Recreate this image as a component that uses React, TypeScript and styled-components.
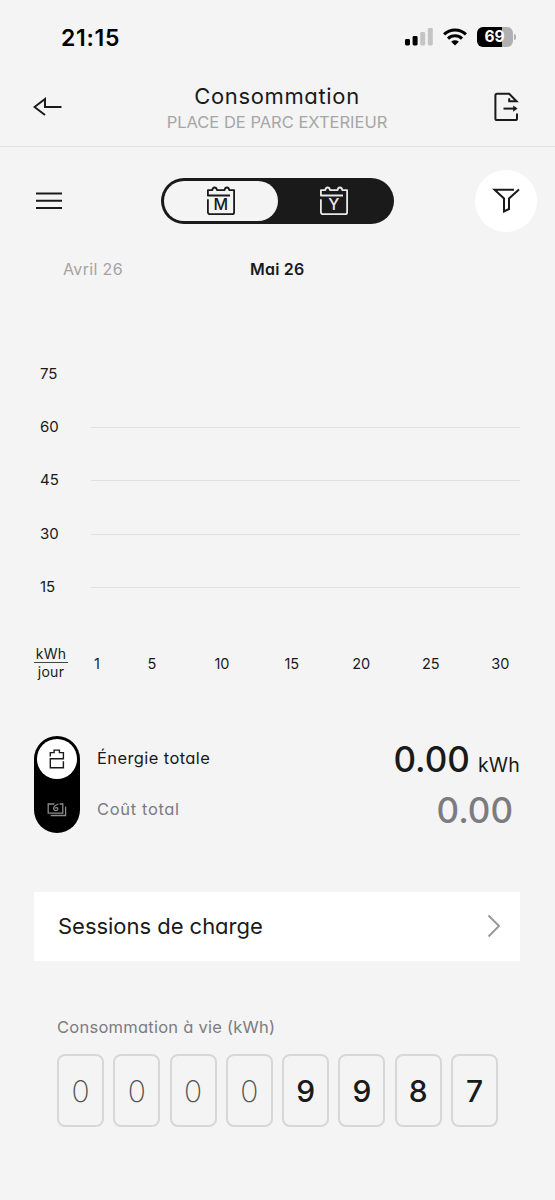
import React from "react";
import styled, { createGlobalStyle, css } from "styled-components";

const GlobalStyle = createGlobalStyle`
  *, *::before, *::after { box-sizing: border-box; }
  body {
    margin: 0;
    background: #f4f4f4;
    color: #1a1a1a;
    font-family: Inter, "Liberation Sans", sans-serif;
    font-feature-settings: "cv11" 1;
    -webkit-font-smoothing: antialiased;
  }
  button { font: inherit; color: inherit; border: 0; padding: 0; background: none; }
  svg { display: block; flex: none; }
`;

const Screen = styled.main`
  width: 555px;
  height: 1200px;
  overflow: hidden;
  display: flex;
  flex-direction: column;
  background: #f4f4f4;
`;

const Label = styled.span<{ $size: number; $weight?: number; $track?: number; $color?: string }>`
  font-size: ${(p) => p.$size}px;
  font-weight: ${(p) => p.$weight ?? 400};
  letter-spacing: ${(p) => p.$track ?? 0}px;
  color: ${(p) => p.$color ?? "#1a1a1a"};
  line-height: 1.2;
  white-space: nowrap;
`;

const StatusBar = styled.div`
  height: 74px;
  padding: 0 39px 0 61px;
  display: flex;
  align-items: center;
  justify-content: space-between;
`;

const Clock = styled.div`
  padding-top: 3px;
`;

const StatusIcons = styled.div`
  display: flex;
  align-items: center;
  gap: 10px;
`;

const Battery = styled.div`
  display: flex;
  align-items: center;
  gap: 1px;
`;

const BatteryBody = styled.div`
  width: 36px;
  height: 20px;
  border-radius: 6px;
  background: linear-gradient(90deg, #000 69%, #b0b0b0 69%);
  color: #fff;
  font-size: 15.5px;
  font-weight: 700;
  line-height: 20px;
  text-align: center;
  padding-right: 1px;
`;

const BatteryCap = styled.div`
  width: 2px;
  height: 6px;
  border-radius: 0 2px 2px 0;
  background: #b0b0b0;
`;

const Header = styled.header`
  height: 73px;
  padding: 0 36px 0 33px;
  display: grid;
  grid-template-columns: 60px 1fr 60px;
  border-bottom: 1px solid #e2e2e2;
`;

const HeaderAction = styled.button<{ $end?: boolean }>`
  display: flex;
  align-items: center;
  justify-content: ${(p) => (p.$end ? "flex-end" : "flex-start")};
  height: 65px;
`;

const Titles = styled.div`
  display: flex;
  flex-direction: column;
  align-items: center;
  gap: 4px;
  padding: 9px 0 0 2px;
`;

const Toolbar = styled.div`
  height: 107px;
  padding: 0 18px 0 36px;
  display: flex;
  align-items: center;
  justify-content: space-between;
`;

const MenuButton = styled.button`
  width: 44px;
  display: flex;
`;

const PeriodSwitch = styled.div`
  width: 233px;
  height: 46px;
  padding: 3px;
  border-radius: 23px;
  background: #1a1a1a;
  display: flex;
`;

const PeriodOption = styled.button<{ $active?: boolean }>`
  flex: 1;
  display: flex;
  align-items: center;
  justify-content: center;
  border-radius: 20px;
  ${(p) => (p.$active ? css`background: #f4f4f4; color: #1a1a1a;` : css`color: #e8e8e8;`)}
`;

const FilterButton = styled.button`
  width: 62px;
  height: 62px;
  border-radius: 50%;
  background: #fff;
  display: flex;
  align-items: center;
  justify-content: center;
`;

const Months = styled.div`
  height: 32px;
  padding-left: 63px;
  display: grid;
  grid-template-columns: 187px 1fr;
  align-items: center;
`;

const Chart = styled.section`
  padding: 61px 35px 0 40px;
  display: flex;
  flex-direction: column;
`;

const ChartRow = styled.div`
  height: 53.3px;
  display: grid;
  grid-template-columns: 51px 1fr;
  align-items: center;
`;

const GridLine = styled.div`
  height: 1px;
  margin-top: 1px;
  background: #e0e0e0;
`;

const DayAxis = styled.div`
  height: 36px;
  margin-top: 32px;
  padding: 0 20px 0 34px;
  display: flex;
  align-items: center;
`;

const Unit = styled.div`
  width: 34px;
  display: flex;
  flex-direction: column;
  align-items: center;
`;

const UnitBar = styled.div`
  width: 34px;
  height: 1px;
  background: #444;
  margin: 0 0 1px;
`;

const Days = styled.div`
  flex: 1;
  padding-left: 9px;
  margin-top: 1px;
  display: grid;
  grid-template-columns: 40px 70px 70px 69.5px 69.5px 69.5px 69.5px;
  text-align: center;
`;

const Totals = styled.section`
  height: 97px;
  margin: 55px 35px 0 34px;
  display: grid;
  grid-template-rows: 97px;
  grid-template-columns: 46px 1fr auto;
  column-gap: 17px;
`;

const MetricSwitch = styled.div`
  border-radius: 23px;
  padding: 3px;
  background: #000;
  display: flex;
  flex-direction: column;
`;

const MetricOption = styled.button<{ $active?: boolean }>`
  height: ${(p) => (p.$active ? 40 : 51)}px;
  margin-top: ${(p) => (p.$active ? 0 : 5)}px;
  flex: none;
  border-radius: 50%;
  display: flex;
  align-items: center;
  justify-content: center;
  ${(p) => (p.$active ? css`background: #fff; color: #1a1a1a;` : css`color: #8b8b8b;`)}
`;

const MetricLabels = styled.div`
  display: grid;
  grid-template-rows: 45px 57px;
  align-items: center;
`;

const MetricValues = styled.div`
  display: grid;
  grid-template-rows: 46px 55px;
  align-items: center;
  justify-items: end;
`;

const ValueWithUnit = styled.div`
  display: flex;
  align-items: baseline;
  gap: 8px;
`;

const SecondaryValue = styled.div`
  padding-right: 7px;
`;

const SessionsLink = styled.button`
  height: 69px;
  margin: 59px 35px 0 34px;
  padding: 0 19px 1px 24px;
  background: #fff;
  display: flex;
  align-items: center;
  justify-content: space-between;
`;

const Lifetime = styled.section`
  margin: 57px 57px 0;
  display: flex;
  flex-direction: column;
  gap: 16px;
`;

const Counter = styled.div`
  display: flex;
  gap: 9.3px;
`;

const Digit = styled.div<{ $leading?: boolean }>`
  width: 47px;
  height: 73px;
  border: 2px solid #d7d7d7;
  border-radius: 8px;
  display: flex;
  align-items: center;
  justify-content: center;
  font-size: 30px;
  font-weight: ${(p) => (p.$leading ? 200 : 500)};
  color: ${(p) => (p.$leading ? "#555" : "#1a1a1a")};
`;

const SignalIcon = () => (
  <svg width="28" height="18" viewBox="0 0 28 18">
    <rect x="0" y="11" width="5" height="6.5" rx="1.4" fill="#000" />
    <rect x="7.6" y="8" width="5" height="9.5" rx="1.4" fill="#000" />
    <rect x="15.2" y="4" width="5" height="13.5" rx="1.4" fill="#c4c4c4" />
    <rect x="22.8" y="0" width="5" height="17.5" rx="1.4" fill="#c4c4c4" />
  </svg>
);

const WifiIcon = () => (
  <svg width="24" height="18" viewBox="0 0 24 18" fill="none" stroke="#000" strokeWidth="3">
    <path d="M1.1 6.4a15.5 15.5 0 0 1 21.8 0" />
    <path d="M5 10.6a10 10 0 0 1 14 0" />
    <path d="M8.2 13.8a5.6 5.6 0 0 1 7.6 0L12 17.6z" fill="#000" stroke="none" />
  </svg>
);

const BackIcon = () => (
  <svg width="30" height="20" viewBox="0 0 30 20" fill="none" stroke="#1a1a1a" strokeWidth="2">
    <path d="M28.5 10H12V2L1.5 10L12 18" />
  </svg>
);

const ExportIcon = () => (
  <svg width="26" height="30" viewBox="0 0 26 30" fill="none" stroke="#1a1a1a" strokeWidth="2">
    <path d="M24 21.5V26.5a1.6 1.6 0 0 1-1.6 1.6H4a1.6 1.6 0 0 1-1.6-1.6V3.4A1.6 1.6 0 0 1 4 1.8H16.2L23.5 9.3H16.2V6.2" />
    <path d="M10.5 16.6H22.5" />
    <path d="M20.2 13.4l4.4 3.2-4.4 3.2z" fill="#1a1a1a" stroke="none" />
  </svg>
);

const MenuIcon = () => (
  <svg width="26" height="18" viewBox="0 0 26 18" stroke="#1a1a1a" strokeWidth="2">
    <path d="M0 1.6H26M0 8.8H26M0 16H26" />
  </svg>
);

const CalendarIcon = ({ letter }: { letter: string }) => (
  <svg width="30" height="30" viewBox="0 0 30 30" fill="none" stroke="currentColor" strokeWidth="1.8" strokeLinejoin="round">
    <path d="M24 9.5H1.9V4.2H6.3C6.5 2.2 7.3 1.5 8.6 1.5S10.7 2.2 11 4.2H18.6C18.8 2.2 19.6 1.5 20.9 1.5S23 2.2 23.3 4.2H28.1V26.2a2 2 0 0 1-2 2H3.9a2 2 0 0 1-2-2V13.3" />
    <text x="14.7" y="23.8" textAnchor="middle" fontSize="16" fontWeight={500} fill="currentColor" stroke="none">
      {letter}
    </text>
  </svg>
);

const FilterIcon = () => (
  <svg width="30" height="26" viewBox="0 0 30 26" fill="none" stroke="#1a1a1a" strokeWidth="2">
    <path d="M23 1.8H3.6L13 10.4V23.4L18 21V10.4L28 1.4" />
  </svg>
);

const BatteryIcon = () => (
  <svg width="16" height="20" viewBox="0 0 16 20" fill="none" stroke="currentColor" strokeWidth="1.4">
    <path d="M1.3 7.6V3.6H5.1V1.1H10.4V3.6H14.4V9.8H1.3V18.8H14.4V12.3" />
  </svg>
);

const MoneyIcon = () => (
  <svg width="20" height="15" viewBox="0 0 20 15" fill="none" stroke="currentColor" strokeWidth="1.3">
    <path d="M7.4 2H1.2V11.2H15.8V2H12.6" />
    <path d="M18.6 4.5V13.5H3.7" />
    <path d="M11.4 2C8 3.3 6.2 5 6.7 7.1c.5 2.1 3.7 2.1 4.1.1.3-1.8-1.9-2.2-2.5-.7" />
  </svg>
);

const ChevronIcon = () => (
  <svg width="14" height="24" viewBox="0 0 14 24" fill="none" stroke="#999" strokeWidth="2">
    <path d="M1.5 1.5L12 12L1.5 22.5" />
  </svg>
);

const levels = [75, 60, 45, 30, 15];
const days = [1, 5, 10, 15, 20, 25, 30];
const counter = ["0", "0", "0", "0", "9", "9", "8", "7"];

export default function App() {
  return (
    <>
      <GlobalStyle />
      <Screen>
        <StatusBar>
          <Clock>
            <Label $size={23} $weight={600} $track={0.7} $color="#000">21:15</Label>
          </Clock>
          <StatusIcons>
            <SignalIcon />
            <WifiIcon />
            <Battery>
              <BatteryBody>69</BatteryBody>
              <BatteryCap />
            </Battery>
          </StatusIcons>
        </StatusBar>

        <Header>
          <HeaderAction aria-label="Retour"><BackIcon /></HeaderAction>
          <Titles>
            <Label $size={22} $track={0.65}>Consommation</Label>
            <Label $size={16.5} $color="#a6a6a6">PLACE DE PARC EXTERIEUR</Label>
          </Titles>
          <HeaderAction $end aria-label="Exporter"><ExportIcon /></HeaderAction>
        </Header>

        <Toolbar>
          <MenuButton aria-label="Menu"><MenuIcon /></MenuButton>
          <PeriodSwitch>
            <PeriodOption $active><CalendarIcon letter="M" /></PeriodOption>
            <PeriodOption><CalendarIcon letter="Y" /></PeriodOption>
          </PeriodSwitch>
          <FilterButton aria-label="Filtrer"><FilterIcon /></FilterButton>
        </Toolbar>

        <Months>
          <Label $size={16} $track={0.35} $color="#a3a3a3">Avril 26</Label>
          <Label $size={16} $weight={600} $track={0.2}>Mai 26</Label>
        </Months>

        <Chart>
          {levels.map((level, i) => (
            <ChartRow key={level}>
              <Label $size={15}>{level}</Label>
              {i > 0 && <GridLine />}
            </ChartRow>
          ))}
        </Chart>

        <DayAxis>
          <Unit>
            <Label $size={14} $track={0.2}>kWh</Label>
            <UnitBar />
            <Label $size={14} $track={0.3}>jour</Label>
          </Unit>
          <Days>
            {days.map((day) => (
              <Label key={day} $size={14.5}>{day}</Label>
            ))}
          </Days>
        </DayAxis>

        <Totals>
          <MetricSwitch>
            <MetricOption $active aria-label="Énergie"><BatteryIcon /></MetricOption>
            <MetricOption aria-label="Coût"><MoneyIcon /></MetricOption>
          </MetricSwitch>
          <MetricLabels>
            <Label $size={16.5} $track={0.4}>Énergie totale</Label>
            <Label $size={16.5} $track={0.65} $color="#7c7c80">Coût total</Label>
          </MetricLabels>
          <MetricValues>
            <ValueWithUnit>
              <Label $size={35} $weight={450}>0.00</Label>
              <Label $size={19.5} $track={0.2}>kWh</Label>
            </ValueWithUnit>
            <SecondaryValue>
              <Label $size={35} $weight={450} $color="#7c7c80">0.00</Label>
            </SecondaryValue>
          </MetricValues>
        </Totals>

        <SessionsLink>
          <Label $size={22} $track={-0.03}>Sessions de charge</Label>
          <ChevronIcon />
        </SessionsLink>

        <Lifetime>
          <Label $size={16.5} $track={0.25} $color="#7c7c80">Consommation à vie (kWh)</Label>
          <Counter>
            {counter.map((digit, i) => (
              <Digit key={i} $leading={i < 4}>{digit}</Digit>
            ))}
          </Counter>
        </Lifetime>
      </Screen>
    </>
  );
}
